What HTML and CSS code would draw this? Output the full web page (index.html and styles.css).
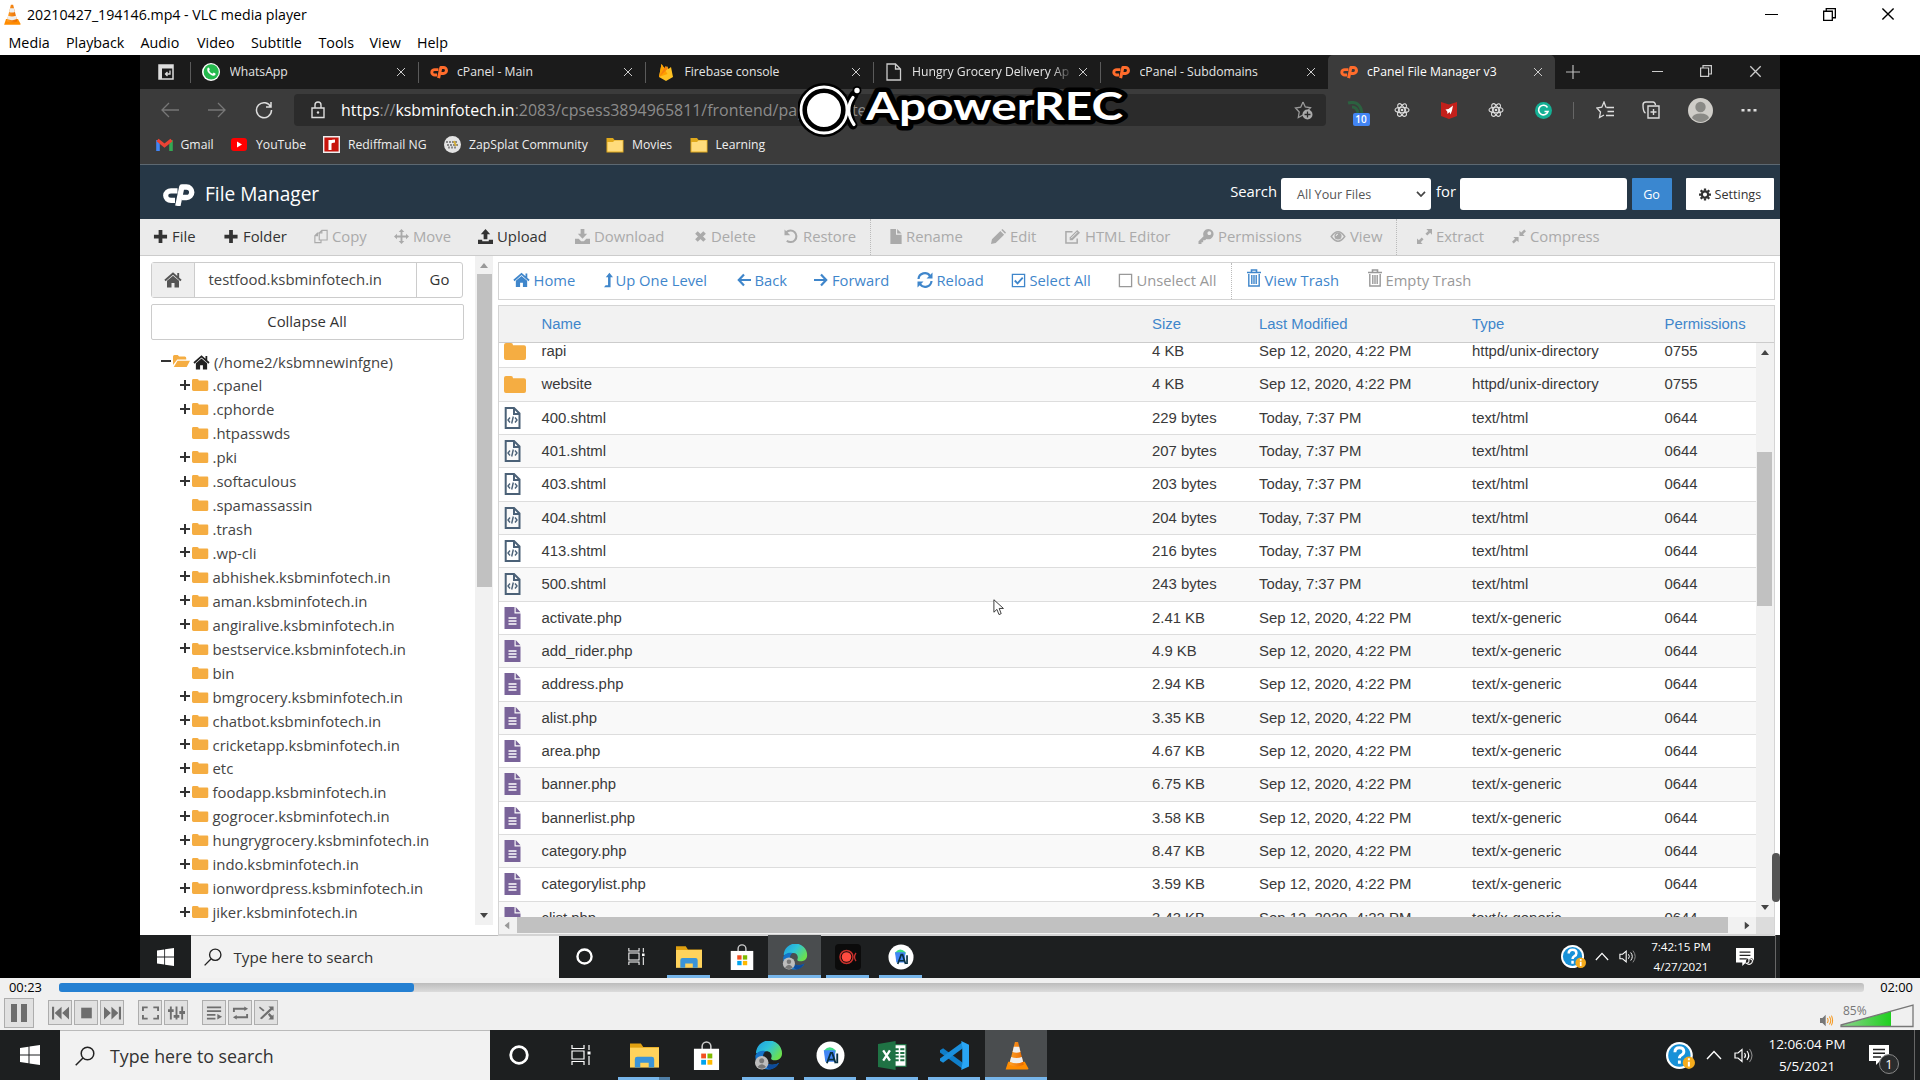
FILE: index.html
```html
<!DOCTYPE html>
<html lang="en">
<head>
<meta charset="utf-8">
<title>20210427_194146.mp4 - VLC media player</title>
<link rel="stylesheet" href="styles.css">
</head>
<body>
<svg class="defs" width="0" height="0">
<defs>
<linearGradient id="coneG" x1="0" x2="1"><stop offset="0" stop-color="#ffa028"/><stop offset="1" stop-color="#e86a00"/></linearGradient>
<linearGradient id="edgeA" x1="0" y1="0" x2="1" y2=".6"><stop offset="0" stop-color="#1e9be0"/><stop offset=".5" stop-color="#2fc3d8"/><stop offset="1" stop-color="#6be04e"/></linearGradient>
<linearGradient id="volG" x1="0" x2="1"><stop offset="0" stop-color="#8fd38f"/><stop offset="1" stop-color="#1fd01f"/></linearGradient>
<symbol id="cone" viewBox="0 0 24 28"><path d="M4 20h16l3.500 6.500q.3 1-1 1h-21q-1.300-1-1z" fill="#ff8c00"/><path d="M10.500 1h3L19 23q-7 3.500-14 0z" fill="url(#coneG)"/><path d="M9.400 5.500h5.200l1.200 5q-3.800 1.600-7.600 0zM6.800 15.500q5.200 2 10.400 0l1.200 4.500q-6.400 3-12.800 0z" fill="#eee"/></symbol>
<symbol id="cp" viewBox="0 0 32 22"><path d="M15 6.800H8.500a5.300 4.800 0 0 0 0 9.600H12.500" fill="none" stroke="currentColor" stroke-width="5.200"/><path d="M15.300 22 19.300 3H24a5 5 0 0 1 0 10.500h-4.500" fill="none" stroke="currentColor" stroke-width="5.400" stroke-linejoin="round"/></symbol>
<symbol id="x" viewBox="0 0 10 10"><path d="M1 1l8 8M9 1l-8 8" stroke="currentColor" stroke-width="1" fill="none"/></symbol>
<symbol id="restore" viewBox="0 0 12 12"><path d="M.6 3h8v8.400h-8zM3 3V.6h8.400V9H8.600" fill="none" stroke="currentColor" stroke-width="1.200"/></symbol>
<symbol id="plus" viewBox="0 0 16 16"><path d="M6 1h4v5h5v4h-5v5H6v-5H1V6h5z" fill="currentColor"/></symbol>
<symbol id="copy" viewBox="0 0 16 16"><path d="M6 4l3-3h6v11H6zM9 1v3H6M6 4H4L1 7v8h7v-3M4 4v3H1" fill="none" stroke="currentColor" stroke-width="1.300"/></symbol>
<symbol id="move" viewBox="0 0 16 16"><path d="M8 0l3 3.200H9V7h3.800V5L16 8l-3.200 3V9H9v3.800h2L8 16l-3-3.200h2V9H3.200v2L0 8l3.200-3v2H7V3.200H5z" fill="currentColor"/></symbol>
<symbol id="upload" viewBox="0 0 16 16"><path d="M8 0l5 5.500H10V11H6V5.500H3zM0 11.500h4.500V13h7v-1.500H16V16H0z" fill="currentColor"/></symbol>
<symbol id="download" viewBox="0 0 16 16"><path d="M6 0h4v5h3L8 10.500 3 5h3zM0 10.500h4l2.500 2.500h3l2.500-2.500h4V16H0z" fill="currentColor"/></symbol>
<symbol id="del" viewBox="0 0 16 16"><path d="M3 3l10 10M13 3L3 13" stroke="currentColor" stroke-width="4.500"/></symbol>
<symbol id="undo" viewBox="0 0 16 16"><path d="M2.500 3.500A6.200 6.200 0 1 1 3 12.500" fill="none" stroke="currentColor" stroke-width="2.200"/><path d="M.5.500v6.200h6.200z" fill="currentColor"/></symbol>
<symbol id="file" viewBox="0 0 12 16"><path d="M0 0h6v6h6v10H0zM7.200 0L12 4.900H7.200z" fill="currentColor"/></symbol>
<symbol id="pencil" viewBox="0 0 16 16"><path d="M0 16l1-5L10 2l4 4-9 9zM11 1l1.200-1L16 3.700 15 5z" fill="currentColor"/></symbol>
<symbol id="edit" viewBox="0 0 16 16"><path d="M13 10v5H1V3h7" fill="none" stroke="currentColor" stroke-width="1.600"/><path d="M5 12V9l8-8 3 3-8 8z" fill="currentColor"/><path d="M6.500 9.800l6.500-6.500" stroke="#eee" stroke-width="1"/></symbol>
<symbol id="key" viewBox="0 0 16 16"><path d="M10.500 0a5.500 5.500 0 1 1-2 10.600L7 12H5v2H3.200v2H0v-3l5.400-5.400A5.500 5.500 0 0 1 10.500 0zm1 2.500a2 2 0 1 0 .1 0z" fill="currentColor" fill-rule="evenodd"/></symbol>
<symbol id="eye" viewBox="0 0 16 16"><path d="M.8 8Q8-2 15.200 8 8 18 .8 8z" fill="none" stroke="currentColor" stroke-width="1.600"/><circle cx="8" cy="7.500" r="3.800" fill="currentColor"/><path d="M6 7.500a2 2 0 0 1 2-2" stroke="#eee" fill="none"/></symbol>
<symbol id="extract" viewBox="0 0 16 16"><path d="M10 0h6v6l-2-2-3 3-2-2 3-3zM0 16v-6l2 2 3-3 2 2-3 3 2 2z" fill="currentColor"/></symbol>
<symbol id="compress" viewBox="0 0 16 16"><path d="M8.500 7.500v-6l2 2L14 0l2 2-3.500 3.500 2 2zM7.500 8.500v6l-2-2L2 16l-2-2 3.500-3.500-2-2z" fill="currentColor"/></symbol>
<symbol id="home" viewBox="0 0 18 16"><path d="M9 3.800l6 5V15.500h-4.500V11h-3v4.500H3V8.800z" fill="currentColor"/><path d="M1 8.500L9 1.500l8 7M14.200 1v4.500" fill="none" stroke="currentColor" stroke-width="1.900"/></symbol>
<symbol id="up" viewBox="0 0 10 16"><path d="M6 0l4 5H7.300v11H0l1.800-2.300h2.700V5H2z" fill="currentColor"/></symbol>
<symbol id="left" viewBox="0 0 14 14"><path d="M7 1.500L1.800 7 7 12.500M2 7h12" fill="none" stroke="currentColor" stroke-width="2.200"/></symbol>
<symbol id="right" viewBox="0 0 14 14"><path d="M7 1.500L12.200 7 7 12.500M12 7H0" fill="none" stroke="currentColor" stroke-width="2.200"/></symbol>
<symbol id="reload" viewBox="0 0 16 16"><path d="M1.500 7A6.300 6.300 0 0 1 13 4M14.500 9A6.300 6.300 0 0 1 3 12" fill="none" stroke="currentColor" stroke-width="2.200"/><path d="M15.500.5v6h-6zM.5 15.500v-6h6z" fill="currentColor"/></symbol>
<symbol id="check" viewBox="0 0 16 16"><path d="M1.500 1.500h13v13h-13z" fill="none" stroke="currentColor" stroke-width="1.400"/><path d="M4 8l3 3 5.500-6" fill="none" stroke="currentColor" stroke-width="2"/></symbol>
<symbol id="box" viewBox="0 0 16 16"><path d="M1.500 1.500h13v13h-13z" fill="none" stroke="currentColor" stroke-width="1.400"/></symbol>
<symbol id="trash" viewBox="0 0 14 18"><path d="M0 3.500h14M4.500 3V1h5v2" fill="none" stroke="currentColor" stroke-width="1.600"/><path d="M1.800 5v12h10.400V5M4.800 6v9M7 6v9M9.200 6v9" fill="none" stroke="currentColor" stroke-width="1.400"/></symbol>
<symbol id="gear" viewBox="0 0 16 16"><circle cx="8" cy="8" r="4.200" fill="none" stroke="currentColor" stroke-width="3"/><path d="M8 0v3M8 13v3M0 8h3M13 8h3M2.300 2.300l2.200 2.200M11.500 11.500l2.200 2.200M13.700 2.300l-2.200 2.200M4.500 11.500l-2.200 2.200" stroke="currentColor" stroke-width="3"/></symbol>
<symbol id="folder" viewBox="0 0 22 17" preserveAspectRatio="none"><path d="M0 2Q0 0 2 0h5q2 0 2 2.200h11q2 0 2 2V15q0 2-2 2H2q-2 0-2-2z" fill="#f5ad42"/></symbol>
<symbol id="fopen" viewBox="0 0 18 12" preserveAspectRatio="none"><path d="M0 10V1.500Q0 0 1.500 0h3.500L6.500 1.500h6q1.500 0 1.500 1.500v1.500H4.500z" fill="#f5ad42"/><path d="M4.800 5.700H18L14.500 12H.8z" fill="#f5ad42"/></symbol>
<symbol id="code" viewBox="0 0 16 22"><path d="M1.200 1h8.300L15 6.500V21H1.200zM9.500 1v6H15" fill="none" stroke="#4b6177" stroke-width="2"/><path d="M5.500 10.500L3.500 13l2 2.500M10.500 10.500l2 2.500-2 2.500M8.800 9.500l-1.600 7" fill="none" stroke="#4b6177" stroke-width="1.400"/></symbol>
<symbol id="doc" viewBox="0 0 16 22"><path d="M0 0h10v6.500h6V22H0zM11.200 0L16 5.300h-4.800z" fill="#796399"/><path d="M4 11h8M4 14h8M4 17h8" stroke="#fff" stroke-width="1.300"/></symbol>
<symbol id="bfold" viewBox="0 0 18 16"><path d="M.5 1h6.500l1.500 2H17.500v12.500H.5z" fill="#e0a91c"/><path d="M1.500 5h5.500l1.500-1.500h8.200v11H1.500z" fill="#ffdc7c"/></symbol>
<symbol id="react" viewBox="0 0 16 16"><g fill="none" stroke="#ddd" stroke-width="1.100"><ellipse cx="8" cy="8" rx="7" ry="2.800"/><ellipse cx="8" cy="8" rx="7" ry="2.800" transform="rotate(60 8 8)"/><ellipse cx="8" cy="8" rx="7" ry="2.800" transform="rotate(120 8 8)"/></g><circle cx="8" cy="8" r="1.300" fill="#ddd"/></symbol>
<symbol id="win" viewBox="0 0 20 20" preserveAspectRatio="none"><path d="M0 2.900l8.500-1.200v7.800H0zM9.500 1.500L20 0v9.500H9.500zM0 10.500h8.500v7.800L0 17.100zM9.500 10.500H20V20L9.500 18.500z" fill="#fff"/></symbol>
<symbol id="lens" viewBox="0 0 20 20"><circle cx="12.500" cy="7.500" r="6.300" fill="none" stroke="#222" stroke-width="1.500"/><path d="M8 12L.7 19.300" stroke="#222" stroke-width="1.500"/></symbol>
<symbol id="ring" viewBox="0 0 20 20"><circle cx="10" cy="10" r="8.300" fill="none" stroke="#fff" stroke-width="2.800"/></symbol>
<symbol id="tview" viewBox="0 0 20 20"><path d="M1 0v3.500h12V0M1 20v-3.500h12V20M1 6h12v8H1zM18 0v5M18 11v9" fill="none" stroke="#fff" stroke-width="1.200"/><path d="M16.500 6.500h3v3h-3z" fill="#fff"/></symbol>
<symbol id="expl" viewBox="0 0 24 22"><path d="M0 1h9l2 3h13v6H0z" fill="#e0a010"/><path d="M0 4.500h24V21H0z" fill="#ffd35c"/><path d="M4 21v-7q0-2 2-2h12q2 0 2 2v7h-4.500v-4h-7v4z" fill="#3a94d8"/></symbol>
<symbol id="store" viewBox="0 0 26 30"><path d="M8.500 9V5.500a4.500 4.500 0 0 1 9 0V9" fill="none" stroke="#ccc" stroke-width="1.600"/><path d="M0 8h26v22H0z" fill="#fff"/><path d="M7.500 13H12.500v5h-5z" fill="#f25022"/><path d="M14 13h5v5h-5z" fill="#7fba00"/><path d="M7.500 19.500h5v5h-5z" fill="#00a4ef"/><path d="M14 19.500h5v5h-5z" fill="#ffb900"/></symbol>
<symbol id="edge" viewBox="0 0 30 30"><path d="M2 13A13.500 13.500 0 0 1 29 13c0 5-4 7-7.500 7-3 0-4.500-1-3.500-3 1-3-1-6.500-5-6.500-5 0-9 2-11 2.500z" fill="url(#edgeA)"/><path d="M1.500 15C3 11 8 9 12 10.500c-4 3-4 10 2 13 4 2 9 1 12-1-3 6-10 8-15 6.500C4 27 1 21 1.500 15z" fill="#1573c9"/><path d="M12 11c-4 4-3 10 2 12.500 4 2 9 1 12-1-2 4-6 6.500-9 7-7-2-10-13-5-18.500z" fill="#0d4b9b"/><circle cx="8" cy="22.500" r="7" fill="#bdbdbd"/><circle cx="8" cy="20.500" r="2.600" fill="#777"/><path d="M3.500 27q4.500-6 9 0-4.500 3.500-9 0z" fill="#777"/></symbol>
<symbol id="rec" viewBox="0 0 26 26"><rect width="26" height="26" rx="4" fill="#0b0b0b"/><circle cx="11.500" cy="13" r="6.500" fill="none" stroke="#c8302c" stroke-width="1.500"/><circle cx="11.500" cy="13" r="4.800" fill="#ff4b40"/><path d="M21 9q-3 4 0 8" stroke="#c8302c" fill="none" stroke-width="1.300"/></symbol>
<symbol id="as" viewBox="0 0 28 28"><circle cx="14" cy="14" r="13.500" fill="#fff"/><path d="M8 9q5-6 11 0v2H8z" fill="#3ddc84"/><path d="M7.500 9h11v11H9z" fill="#4285f4"/><path d="M10.500 21.500l3.700-10h1.500l3.200 10M12 18h5.500M20.500 12v9.500" fill="none" stroke="#073042" stroke-width="1.800"/></symbol>
<symbol id="excel" viewBox="0 0 28 28"><path d="M14 3.500h13v21H14z" fill="#fff" stroke="#1f7244"/><path d="M16 7h4v2h-4zm0 3.500h4v2h-4zm0 3.500h4v2h-4zm0 3.500h4v2h-4zM21.500 7h4v2h-4zm0 3.500h4v2h-4zm0 3.500h4v2h-4zm0 3.500h4v2h-4z" fill="#1f7244"/><path d="M0 3L17 0v28L0 25z" fill="#1f7244"/><path d="M5 9l6.500 10M11.500 9L5 19" stroke="#fff" stroke-width="2.200"/></symbol>
<symbol id="code-ed" viewBox="0 0 28 28"><path d="M0 9l3-2 19 14v6L0 11z" fill="#0f7ec9"/><path d="M0 19l3 2L22 7V1L0 17z" fill="#1a8fdc"/><path d="M20.500 0L28 3.500v21L20.500 28l1-6V6z" fill="#29a5f5"/></symbol>
<symbol id="help" viewBox="0 0 26 26"><circle cx="12" cy="13" r="12" fill="#fff"/><circle cx="12" cy="13" r="10" fill="#1791d8"/><path d="M8 10q0-4 4-4t4 3.500q0 2-2 3t-2 3M12 17.500v3" fill="none" stroke="#fff" stroke-width="2.600"/><circle cx="20.500" cy="19.500" r="5.500" fill="#f5ab1c"/><path d="M20.500 15.500v1.800M20.500 18.500v4.300" stroke="#fff" stroke-width="1.800"/></symbol>
<symbol id="caret" viewBox="0 0 16 10"><path d="M1 9l7-7.500L15 9" fill="none" stroke="#fff" stroke-width="1.400"/></symbol>
<symbol id="snd" viewBox="0 0 20 16"><path d="M1 5.500h3L8 2v12L4 10.500H1z" fill="none" stroke="#fff" stroke-width="1.200"/><path d="M10.500 5.500q2 2.500 0 5M13 3.500q3.500 4.500 0 9" fill="none" stroke="#fff" stroke-width="1.100"/><path d="M15.500 1.500q5 6.500 0 13" fill="none" stroke="#888" stroke-width="1.100"/></symbol>
<symbol id="note" viewBox="0 0 20 20"><path d="M0 0h20v16h-9l-4 4v-4H0z" fill="#fff"/><path d="M4 4.500h12M4 8.200h12M4 12h8" stroke="#222" stroke-width="1.400"/></symbol>
<symbol id="tri" viewBox="0 0 8 5"><path d="M0 5L4 0l4 5z" fill="currentColor"/></symbol>
</defs>
</svg>

<header class="titlebar">
  <svg class="ico-cone" viewBox="0 0 24 28"><use href="#cone"/></svg>
  <span class="title">20210427_194146.mp4 - VLC media player</span>
  <div class="winbtns"><i class="min"></i><svg width="13" height="13"><use href="#restore"/></svg><svg width="14" height="14"><use href="#x"/></svg></div>
</header>
<nav class="menu"><span>Media</span><span>Playback</span><span>Audio</span><span>Video</span><span>Subtitle</span><span>Tools</span><span>View</span><span>Help</span></nav>

<main class="stage">
 <div class="video">
  <div class="tabs">
    <div class="tabmenu"><svg width="16" height="16" viewBox="0 0 16 16"><path d="M1 1h14v14H1z" fill="none" stroke="#ddd" stroke-width="1.500"/><path d="M1 1h14v3.500H1zM1 4h3v11H1z" fill="#ddd"/><path d="M12 6.500v3.500H7.500M9.500 8l-2 2 2 2" fill="none" stroke="#ddd" stroke-width="1.300"/></svg></div>
    <div class="tab"><svg class="fav" viewBox="0 0 18 18" preserveAspectRatio="none"><circle cx="9" cy="9" r="9" fill="#fff"/><path d="M0 18l1-5z" fill="#fff"/><circle cx="9.200" cy="8.800" r="7.600" fill="#25b94d"/><path d="M5.500 5q1.500-1.500 2.300 1.500-1 1-.5 1.500Q8.500 10 10.500 10.800l1.200-1.200q2.600 1 1.800 2.200-2 2-5-.3Q4.200 8.500 5.500 5z" fill="#fff"/></svg><span>WhatsApp</span><svg class="cl"><use href="#x"/></svg></div>
    <div class="tab"><svg class="fav org"><use href="#cp"/></svg><span>cPanel - Main</span><svg class="cl"><use href="#x"/></svg></div>
    <div class="tab"><svg class="fav" viewBox="0 0 18 18" preserveAspectRatio="none"><path d="M2 14L4.500 1 8 6l2-3 1.500 3L14 4l2 10-7 4z" fill="#ffc222"/><path d="M2 14L4.500 1l6 10z" fill="#ffa000"/><path d="M2 14L11 5.500 8.500 3z" fill="#f6820c"/></svg><span>Firebase console</span><svg class="cl"><use href="#x"/></svg></div>
    <div class="tab"><svg class="fav" viewBox="0 0 18 18" preserveAspectRatio="none"><path d="M2 1h8.500L15.500 6v11H2zM10.500 1v5h5" fill="none" stroke="#ccc" stroke-width="1.300"/></svg><span class="fade">Hungry Grocery Delivery Ap</span><svg class="cl"><use href="#x"/></svg></div>
    <div class="tab"><svg class="fav org"><use href="#cp"/></svg><span>cPanel - Subdomains</span><svg class="cl"><use href="#x"/></svg></div>
    <div class="tab active"><svg class="fav org"><use href="#cp"/></svg><span>cPanel File Manager v3</span><svg class="cl"><use href="#x"/></svg></div>
    <svg class="newtab" viewBox="0 0 14 14"><path d="M7 0v14M0 7h14" stroke="#bbb" stroke-width="1.200"/></svg>
    <div class="ewin"><i class="min"></i><svg width="12" height="12"><use href="#restore"/></svg><svg width="13" height="13"><use href="#x"/></svg></div>
  </div>
  <div class="addr">
    <svg class="nav" viewBox="0 0 18 16"><path d="M8 1L1 8l7 7M1 8h17" fill="none" stroke="#777" stroke-width="1.300"/></svg>
    <svg class="nav" viewBox="0 0 18 16"><path d="M10 1l7 7-7 7M17 8H0" fill="none" stroke="#777" stroke-width="1.300"/></svg>
    <svg class="nav rl" viewBox="0 0 18 18"><path d="M15.800 6A7.500 7.500 0 1 0 16.500 9M16 1v5h-5" fill="none" stroke="#ddd" stroke-width="1.500"/></svg>
    <div class="url"><svg width="14" height="18" viewBox="0 0 14 18"><path d="M1 7h12v9.500H1zM4 7V4a3 3 0 0 1 6 0v3" fill="none" stroke="#ddd" stroke-width="1.400"/><circle cx="7" cy="11.500" r="1.200" fill="#ddd"/></svg><p><b>https<i>://</i>ksbminfotech.in</b>:2083/cpsess3894965811/frontend/paper_lantern/filemanager/index.html</p><svg width="20" height="19" viewBox="0 0 20 19"><path d="M9 1l2.300 5 5.200.8-3.700 3.800M9 14l-4.700 2.500.9-5.500L1.500 7l5.200-.8L9 1" fill="none" stroke="#999" stroke-width="1.300"/><circle cx="13.500" cy="13.500" r="5" fill="#aaa"/><path d="M13.500 10.500v6M10.500 13.500h6" stroke="#2b2b2b" stroke-width="1.300"/></svg></div>
    <div class="exts">
      <span class="ext"><svg width="18" height="18" viewBox="0 0 18 18"><path d="M2 2q12-3 14 10M6 6q5 0 6 6" fill="none" stroke="#2c6140" stroke-width="3"/></svg><em class="badge">10</em></span>
      <span class="ext"><svg width="16" height="16"><use href="#react"/></svg></span>
      <span class="ext"><svg width="16" height="17" viewBox="0 0 16 17"><path d="M0 0l8 2.500L16 0v14l-8 3-8-3z" fill="#c2201b"/><path d="M4.500 7.500l3-.5L12 3.500l-1 5-1.500 4-1-2.500-2 2-.3-2.500z" fill="#fff"/></svg></span>
      <span class="ext"><svg width="16" height="16"><use href="#react"/></svg></span>
      <span class="ext"><svg width="17" height="17" viewBox="0 0 17 17"><circle cx="8.500" cy="8.500" r="8.500" fill="#15b095"/><path d="M12.500 5.500A4.800 4.800 0 1 0 13 9.500H9.500" fill="none" stroke="#fff" stroke-width="1.600"/></svg></span>
    </div>
    <i class="vsep"></i>
    <div class="etools">
      <svg width="18" height="18" viewBox="0 0 18 18"><path d="M10 6.500L8 1 5.800 6.200.8 7l3.700 4-1 5.500L8 14M10.500 6.500H18M11.500 10.500H18M10 14.500h8" fill="none" stroke="#ddd" stroke-width="1.300"/></svg>
      <svg width="18" height="18" viewBox="0 0 18 18"><path d="M6 5h11v12H6zM11.500 8v6M8.500 11h6M3.500 12Q1 11 1 4q0-3 3-3h7q2 0 2.500 3" fill="none" stroke="#ddd" stroke-width="1.400"/></svg>
      <svg width="25" height="25" viewBox="0 0 25 25"><circle cx="12.500" cy="12.500" r="12.500" fill="#cfcdc8"/><circle cx="12.500" cy="9" r="5.200" fill="#8a8a86"/><path d="M4 20q1-4.500 8.500-4.500T21 20q-8 8-17 0z" fill="#8a8a86"/></svg>
      <svg width="16" height="4" viewBox="0 0 16 4"><path d="M.5 1h3v2.500h-3zm6 0h3v2.500h-3zm6 0h3v2.500h-3z" fill="#ddd"/></svg>
    </div>
  </div>
  <div class="bm">
    <span><svg width="17" height="13" viewBox="0 0 17 13"><path d="M2 13V2" stroke="#4285f4" stroke-width="3.600"/><path d="M15 13V2" stroke="#34a853" stroke-width="3.600"/><path d="M1.500 2l7 5.500 7-5.500" fill="none" stroke="#ea4335" stroke-width="3.400"/></svg>Gmail</span>
    <span><svg width="16" height="13" viewBox="0 0 16 13"><rect width="16" height="13" rx="3" fill="#f00"/><path d="M6 3.500v6l5-3z" fill="#fff"/></svg><b>YouTube</b></span>
    <span><svg width="17" height="17" viewBox="0 0 17 17"><path d="M.7.700h15.600v15.600H.7z" fill="#c8140c" stroke="#eee" stroke-width="1.400"/><path d="M7 14V4M7 8q0-3 5-3" fill="none" stroke="#fff" stroke-width="3"/></svg>Rediffmail NG</span>
    <span><svg width="17" height="17" viewBox="0 0 17 17"><circle cx="8.500" cy="8.500" r="8.500" fill="#e4e4e4"/><path d="M2 6h11M3 9h12M4 11.500h8" stroke="#888" stroke-width="1.800" stroke-dasharray="2 1"/><path d="M10 5l2 5" stroke="#d8b13a" stroke-width="2"/></svg>ZapSplat Community</span>
    <span><svg width="18" height="16"><use href="#bfold"/></svg>Movies</span>
    <span><svg width="18" height="16"><use href="#bfold"/></svg>Learning</span>
  </div>
  <div class="cphead">
    <svg class="logo"><use href="#cp"/></svg><h1>File Manager</h1>
    <label>Search</label><div class="sel">All Your Files<svg width="10" height="6" viewBox="0 0 10 6"><path d="M1 .8L5 5 9 .8" fill="none" stroke="#444" stroke-width="1.700"/></svg></div><label class="for">for</label><div class="inp"></div><div class="go">Go</div><div class="settings"><svg width="12" height="13"><use href="#gear"/></svg>Settings</div>
  </div>
  <div class="tools">
    <span class="on"><svg width="15"><use href="#plus"/></svg>File</span><span class="on"><svg width="16"><use href="#plus"/></svg>Folder</span><span><svg width="14"><use href="#copy"/></svg>Copy</span><span><svg width="15"><use href="#move"/></svg>Move</span><span class="on"><svg width="15"><use href="#upload"/></svg>Upload</span><span><svg width="15"><use href="#download"/></svg>Download</span><span><svg width="13"><use href="#del"/></svg>Delete</span><span class="brk"><svg width="15"><use href="#undo"/></svg>Restore</span><span><svg width="12"><use href="#file"/></svg>Rename</span><span><svg width="15"><use href="#pencil"/></svg>Edit</span><span><svg width="17"><use href="#edit"/></svg>HTML Editor</span><span><svg width="16"><use href="#key"/></svg>Permissions</span><span class="brk b2"><svg width="16"><use href="#eye"/></svg>View</span><span><svg width="15"><use href="#extract"/></svg>Extract</span><span><svg width="14"><use href="#compress"/></svg>Compress</span>
  </div>
  <div class="work">
    <aside>
      <div class="side">
        <div class="path"><i><svg width="18" height="16"><use href="#home"/></svg></i><span>testfood.ksbminfotech.in</span><b>Go</b></div>
        <div class="collapse">Collapse All</div>
        <ul class="tree">
          <li class="root"><u class="mi"></u><svg width="17" height="12"><use href="#fopen"/></svg><svg class="hm" width="17" height="16"><use href="#home"/></svg>(/home2/ksbmnewinfgne)</li>
          <li><u></u><svg><use href="#folder"/></svg>.cpanel</li>
          <li><u></u><svg><use href="#folder"/></svg>.cphorde</li>
          <li><u class="no"></u><svg><use href="#folder"/></svg>.htpasswds</li>
          <li><u></u><svg><use href="#folder"/></svg>.pki</li>
          <li><u></u><svg><use href="#folder"/></svg>.softaculous</li>
          <li><u class="no"></u><svg><use href="#folder"/></svg>.spamassassin</li>
          <li><u></u><svg><use href="#folder"/></svg>.trash</li>
          <li><u></u><svg><use href="#folder"/></svg>.wp-cli</li>
          <li><u></u><svg><use href="#folder"/></svg>abhishek.ksbminfotech.in</li>
          <li><u></u><svg><use href="#folder"/></svg>aman.ksbminfotech.in</li>
          <li><u></u><svg><use href="#folder"/></svg>angiralive.ksbminfotech.in</li>
          <li><u></u><svg><use href="#folder"/></svg>bestservice.ksbminfotech.in</li>
          <li><u class="no"></u><svg><use href="#folder"/></svg>bin</li>
          <li><u></u><svg><use href="#folder"/></svg>bmgrocery.ksbminfotech.in</li>
          <li><u></u><svg><use href="#folder"/></svg>chatbot.ksbminfotech.in</li>
          <li><u></u><svg><use href="#folder"/></svg>cricketapp.ksbminfotech.in</li>
          <li><u></u><svg><use href="#folder"/></svg>etc</li>
          <li><u></u><svg><use href="#folder"/></svg>foodapp.ksbminfotech.in</li>
          <li><u></u><svg><use href="#folder"/></svg>gogrocer.ksbminfotech.in</li>
          <li><u></u><svg><use href="#folder"/></svg>hungrygrocery.ksbminfotech.in</li>
          <li><u></u><svg><use href="#folder"/></svg>indo.ksbminfotech.in</li>
          <li><u></u><svg><use href="#folder"/></svg>ionwordpress.ksbminfotech.in</li>
          <li><u></u><svg><use href="#folder"/></svg>jiker.ksbminfotech.in</li>
        </ul>
      </div>
      <div class="sbar"><svg class="t dim"><use href="#tri"/></svg><i></i><svg class="t dn"><use href="#tri"/></svg></div>
    </aside>
    <section class="files">
      <div class="acts"><span><svg width="17" height="16"><use href="#home"/></svg>Home</span><span><svg width="9" height="16"><use href="#up"/></svg>Up One Level</span><span><svg width="14" height="14"><use href="#left"/></svg>Back</span><span><svg width="14" height="14"><use href="#right"/></svg>Forward</span><span><svg width="16" height="16"><use href="#reload"/></svg>Reload</span><span><svg width="15" height="15"><use href="#check"/></svg>Select All</span><span class="off brk"><svg width="15" height="15"><use href="#box"/></svg>Unselect All</span><span><svg class="tr" width="14" height="18"><use href="#trash"/></svg>View Trash</span><span class="off"><svg class="tr" width="14" height="18"><use href="#trash"/></svg>Empty Trash</span></div>
      <div class="grid">
        <div class="row head"><i></i><span>Name</span><span>Size</span><span>Last Modified</span><span>Type</span><span>Permissions</span></div>
        <div class="scroll">
          <div class="rows">
            <div class="row"><svg class="fo"><use href="#folder"/></svg><span>rapi</span><span>4 KB</span><span>Sep 12, 2020, 4:22 PM</span><span>httpd/unix-directory</span><span>0755</span></div>
            <div class="row"><svg class="fo"><use href="#folder"/></svg><span>website</span><span>4 KB</span><span>Sep 12, 2020, 4:22 PM</span><span>httpd/unix-directory</span><span>0755</span></div>
            <div class="row"><svg><use href="#code"/></svg><span>400.shtml</span><span>229 bytes</span><span>Today, 7:37 PM</span><span>text/html</span><span>0644</span></div>
            <div class="row"><svg><use href="#code"/></svg><span>401.shtml</span><span>207 bytes</span><span>Today, 7:37 PM</span><span>text/html</span><span>0644</span></div>
            <div class="row"><svg><use href="#code"/></svg><span>403.shtml</span><span>203 bytes</span><span>Today, 7:37 PM</span><span>text/html</span><span>0644</span></div>
            <div class="row"><svg><use href="#code"/></svg><span>404.shtml</span><span>204 bytes</span><span>Today, 7:37 PM</span><span>text/html</span><span>0644</span></div>
            <div class="row"><svg><use href="#code"/></svg><span>413.shtml</span><span>216 bytes</span><span>Today, 7:37 PM</span><span>text/html</span><span>0644</span></div>
            <div class="row"><svg><use href="#code"/></svg><span>500.shtml</span><span>243 bytes</span><span>Today, 7:37 PM</span><span>text/html</span><span>0644</span></div>
            <div class="row"><svg><use href="#doc"/></svg><span>activate.php</span><span>2.41 KB</span><span>Sep 12, 2020, 4:22 PM</span><span>text/x-generic</span><span>0644</span></div>
            <div class="row"><svg><use href="#doc"/></svg><span>add_rider.php</span><span>4.9 KB</span><span>Sep 12, 2020, 4:22 PM</span><span>text/x-generic</span><span>0644</span></div>
            <div class="row"><svg><use href="#doc"/></svg><span>address.php</span><span>2.94 KB</span><span>Sep 12, 2020, 4:22 PM</span><span>text/x-generic</span><span>0644</span></div>
            <div class="row"><svg><use href="#doc"/></svg><span>alist.php</span><span>3.35 KB</span><span>Sep 12, 2020, 4:22 PM</span><span>text/x-generic</span><span>0644</span></div>
            <div class="row"><svg><use href="#doc"/></svg><span>area.php</span><span>4.67 KB</span><span>Sep 12, 2020, 4:22 PM</span><span>text/x-generic</span><span>0644</span></div>
            <div class="row"><svg><use href="#doc"/></svg><span>banner.php</span><span>6.75 KB</span><span>Sep 12, 2020, 4:22 PM</span><span>text/x-generic</span><span>0644</span></div>
            <div class="row"><svg><use href="#doc"/></svg><span>bannerlist.php</span><span>3.58 KB</span><span>Sep 12, 2020, 4:22 PM</span><span>text/x-generic</span><span>0644</span></div>
            <div class="row"><svg><use href="#doc"/></svg><span>category.php</span><span>8.47 KB</span><span>Sep 12, 2020, 4:22 PM</span><span>text/x-generic</span><span>0644</span></div>
            <div class="row"><svg><use href="#doc"/></svg><span>categorylist.php</span><span>3.59 KB</span><span>Sep 12, 2020, 4:22 PM</span><span>text/x-generic</span><span>0644</span></div>
            <div class="row"><svg><use href="#doc"/></svg><span>clist.php</span><span>3.43 KB</span><span>Sep 12, 2020, 4:22 PM</span><span>text/x-generic</span><span>0644</span></div>
          </div>
          <div class="sbar v2"><svg class="t"><use href="#tri"/></svg><i></i><svg class="t dn"><use href="#tri"/></svg></div>
        </div>
        <div class="hbar"><svg class="t lf dim"><use href="#tri"/></svg><i></i><svg class="t rt"><use href="#tri"/></svg><b></b></div>
      </div>
    </section>
    <i class="pagethumb"></i>
    <svg class="cursor" viewBox="0 0 12 18"><path d="M.6.800V14l3.200-3 2.200 5.500 2.300-1L6.200 10h4.500z" fill="#fff" stroke="#333" stroke-width="1"/></svg>
  </div>
  <div class="task inner">
    <div class="start"><svg><use href="#win"/></svg></div>
    <div class="find"><svg><use href="#lens"/></svg>Type here to search</div>
    <div class="apps">
      <span class="w1"><svg class="s16"><use href="#ring"/></svg></span><span class="w1"><svg class="s16"><use href="#tview"/></svg></span>
      <span class="run"><svg><use href="#expl"/></svg></span><span><svg><use href="#store"/></svg></span><span class="run cur"><svg><use href="#edge"/></svg></span><span class="run"><svg><use href="#rec"/></svg></span><span class="run"><svg><use href="#as"/></svg></span>
    </div>
    <div class="tray"><svg class="hp"><use href="#help"/></svg><svg class="ct"><use href="#caret"/></svg><svg class="sd"><use href="#snd"/></svg><div class="clock"><span>7:42:15 PM</span><span>4/27/2021</span></div><svg class="nt" viewBox="0 0 20 20"><use href="#note"/><circle cx="15.500" cy="15.500" r="4.500" fill="#222"/><path d="M14 11.500q6 1 3.500 5-2.500 3-6 .5 4 0 2.500-5.500z" fill="none" stroke="#fff" stroke-width="1.200"/></svg><i></i></div>
  </div>
  <svg class="mark" viewBox="0 0 340 64">
    <g transform="translate(26 32)"><circle r="21.500" fill="none" stroke="#000" stroke-width="11"/><path d="M30-15Q20 0 29 15" fill="none" stroke="#000" stroke-width="9" stroke-linecap="round"/><circle r="18" fill="#fff" stroke="#000" stroke-width="2"/><circle r="23" fill="none" stroke="#fff" stroke-width="2.800"/><path d="M29-12.500Q20 0 30 14.500" fill="none" stroke="#fff" stroke-width="3.200" stroke-linecap="round"/><circle cx="33" cy="-19.500" r="4.500"/><circle cx="33" cy="-19.500" r="2.700" fill="#fff"/></g>
    <text x="68" y="42" textLength="257" lengthAdjust="spacingAndGlyphs">ApowerREC</text>
  </svg>
 </div>
</main>

<footer class="ctl">
  <div class="seek"><span>00:23</span><div class="track"><i></i></div><span>02:00</span></div>
  <div class="btns">
    <button class="big"><svg width="16" height="18" viewBox="0 0 16 18"><path d="M0 0h6v18H0zM10 0h6v18h-6z"/></svg></button>
    <div class="grp g1"><button><svg viewBox="0 0 16 12"><path d="M0 0h2v12H0zM9 0v12L2.500 6zM16 0v12L9.500 6z"/></svg></button><button><svg viewBox="0 0 16 12"><path d="M3 1h10v10H3z"/></svg></button><button><svg viewBox="0 0 16 12"><path d="M14 0h2v12h-2zM7 0v12l6.500-6zM0 0v12l6.500-6z"/></svg></button></div>
    <div class="grp g2"><button><svg viewBox="0 0 18 14"><path d="M0 0h6v2H2v3H0zM12 0h6v5h-2V2h-4zM0 9h2v3h4v2H0zM16 9h2v5h-6v-2h4z"/></svg></button><button><svg viewBox="0 0 18 14"><path d="M2 0h2v14H2zM8 0h2v14H8zM14 0h2v14h-2zM0 3h6v3H0zM6 9h6v3H6zM12 5h6v3h-6z"/></svg></button></div>
    <div class="grp g3"><button><svg viewBox="0 0 18 14"><path d="M1 0h15v2H1zM1 4h15v2H1zM1 8h9v2H1zM1 12h9v2H1zM12 8l5 3-5 3z"/></svg></button><button><svg viewBox="0 0 18 14"><path d="M1 6V1.500h12V0l4 2.500-4 2.500V3.500H3V6zM17 8v4.500H5V14l-4-2.500L5 9v1.500h10V8z"/></svg></button><button><svg viewBox="0 0 18 14"><path d="M2 0l5 4-1.500 1.500L1 1.500zM10.500 8.500L12 7l3 3 1.500-1.500V14H11l2-2zM11 0h5.500v5L15 3.500 4 13.500 2 12.500 13 2z"/></svg></button></div>
    <div class="vol"><svg class="sp" viewBox="0 0 16 16" ><path d="M0 5h3l4-4v14l-4-4H0z" fill="#777"/><path d="M9 5q2 3 0 6M11.500 3q3.500 5 0 10M14 2q3 6 0 12" fill="none" stroke="#f59a23" stroke-width="1.300"/></svg>
    <div class="lvl"><svg viewBox="0 0 74 24"><path d="M1 21.500L51 7v15.500H1z" fill="url(#volG)"/><path d="M1 21L73 1v21.500H1z" fill="none" stroke="#777" stroke-width="1.300"/></svg><span>85%</span></div></div>
  </div>
</footer>

<div class="task outer">
  <div class="start"><svg><use href="#win"/></svg></div>
  <div class="find"><svg><use href="#lens"/></svg>Type here to search</div>
  <div class="apps">
    <span><svg class="s16"><use href="#ring"/></svg></span><span><svg class="s16"><use href="#tview"/></svg></span>
    <span class="run two"><svg><use href="#expl"/></svg></span><span><svg><use href="#store"/></svg></span><span class="run"><svg><use href="#edge"/></svg></span><span class="run"><svg><use href="#as"/></svg></span><span class="run"><svg><use href="#excel"/></svg></span><span class="run"><svg><use href="#code-ed"/></svg></span><span class="run cur"><svg><use href="#cone"/></svg></span>
  </div>
  <div class="tray"><svg class="hp"><use href="#help"/></svg><svg class="ct"><use href="#caret"/></svg><svg class="sd"><use href="#snd"/></svg><div class="clock"><span>12:06:04 PM</span><span>5/5/2021</span></div><div class="nwrap"><svg class="nt"><use href="#note"/></svg><em>1</em></div><i></i></div>
</div>
</body>
</html>
```
FILE: styles.css
```css
*{box-sizing:border-box}
body{margin:0;width:1920px;height:1080px;overflow:hidden;display:flex;flex-direction:column;background:#fff;font-family:"Open Sans","Noto Sans",sans-serif;color:#000;white-space:nowrap}
svg{display:block;flex:none}
i,em{font-style:normal}
.defs{position:absolute}
.titlebar{height:30px;display:flex;align-items:center;font-size:14.200px;padding:0 0 2px 3px}
.ico-cone{width:18px;height:21px;margin-right:6px}
.title{flex:1}
.winbtns{display:flex;align-items:center;gap:45px;padding-right:25px;color:#000}
.winbtns .min{width:13px;height:1px;background:#000}
.menu{height:25px;display:grid;grid-template-columns:57.500px 74.500px 56.500px 54px 67.500px 51px 47.500px auto;padding-left:8.500px;font-size:14.300px;line-height:26px}
.stage{height:923px;background:#000;padding-left:140px}
.video{width:1640px;height:923px;display:flex;flex-direction:column;background:#fff;position:relative;overflow:hidden}

/* browser chrome */
.tabs{height:34px;background:#1b1b1b;display:flex;align-items:center;font-size:12.200px;color:#e4e4e4}
.tabmenu{width:50px;padding-left:17.500px}
.tab{width:227.500px;height:34px;display:flex;align-items:center;position:relative;padding:0 12px 0 12px}
.tab::before{content:"";position:absolute;left:0;top:7px;width:1px;height:21px;background:#5a5a5a}
.tab.active{background:#3b3b3b;border-radius:5px 5px 0 0;color:#fff}
.tab.active::before{display:none}
.tab .fav{width:18px;height:18px;margin-right:9.500px}
.tab .org{color:#ff6c2c;height:14px}
.tab span{flex:1;overflow:hidden;line-height:20px}
.tab .fade{-webkit-mask-image:linear-gradient(90deg,#000 86%,transparent 99%);mask-image:linear-gradient(90deg,#000 86%,transparent 99%);margin-right:3px}
.cl{width:10px;height:10px;color:#ccc}
.newtab{width:14px;height:14px;margin-left:11px}
.ewin{display:flex;align-items:center;gap:37px;margin-left:auto;padding:0 18px 2px 0;color:#ccc}
.ewin .min{width:11px;height:1px;background:#ccc}
.addr{height:42px;background:#3b3b3b;display:flex;align-items:center;padding-left:21px}
.nav{width:18px;height:16px;margin-right:29px}
.nav.rl{height:18px;margin-right:21px}
.url{width:1031.500px;height:32px;background:#2b2b2b;border-radius:4px;display:flex;align-items:center;padding:0 12px 0 16.500px}
.url p{flex:1;margin:0 0 0 16.500px;font-size:15.950px;color:#8c8c8c;line-height:28px}
.url b{font-weight:400;color:#fff}
.url b i{color:#8c8c8c}
.exts{display:flex;padding-left:6px}
.ext{width:47px;height:18px;display:flex;justify-content:center;align-items:center;position:relative}
.badge{position:absolute;left:21px;top:12px;width:17px;height:13px;border-radius:2px;background:#4285f4;color:#fff;font:600 10px/13px "Open Sans",sans-serif;text-align:center}
.vsep{width:1px;height:17px;background:#666;margin:0 22px 0 6px}
.etools{display:flex;align-items:center;gap:28px}
.bm{height:33px;background:#3b3b3b;display:grid;grid-template-columns:75.500px 92px 121px 162px 83.500px auto;padding-left:15.500px;font-size:12.200px;color:#eee;line-height:26px}
.bm span{display:flex;align-items:center;gap:8px;height:27px}
.bm b{font-weight:400;padding-left:1px}

/* file manager header */
.cphead{height:55px;background:#263746;border-top:1px solid #5d6871;display:flex;align-items:flex-start;padding:13px 6px 0 22px;color:#fff}
.logo{width:33px;height:22px;margin-top:6px}
h1{margin:0;font-weight:400;font-size:19.100px;line-height:33px;padding-left:10px;flex:1}
.cphead label{font-size:14.800px;line-height:26px;padding-right:4px}
.cphead .for{padding:0 4px 0 5px;width:29px}
.sel,.inp,.go,.settings{height:32px;border-radius:3px;background:#fff;font-size:12.600px;color:#555;display:flex;align-items:center}
.sel{width:150px;padding:0 5px 0 16px;justify-content:space-between}
.inp{width:167px}
.go{width:40px;background:#3a87d0;color:#fff;margin:0 14.500px 0 4.500px;justify-content:center;border-radius:1px}
.settings{width:88px;color:#333;padding-left:12.500px;gap:4px;border-radius:1px}
.tools{height:37px;background:#ebebeb;border-bottom:1px solid #ccc;display:grid;grid-template-columns:70px 91px 80px 84px 97px 119px 90px 106px 101px 73px 134px 132px 87px 95px auto;padding-left:13px;font-size:14.850px;color:#aaa}
.tools span,.acts span{display:flex;align-items:center;gap:4px;position:relative}
.tools svg{height:15px}
.tools span{line-height:34px;height:34px}
.tools .on{color:#333}
.brk::after{content:"";position:absolute;right:19px;top:0;height:36px;border-left:1px dotted #bbb}
.b2::after{right:20px}

/* body: tree and listing */
.work{flex:1;display:flex;position:relative;min-height:0}
aside{width:358px;display:flex;font-size:14.900px;color:#444}
.side{width:335px;padding:6px 11px 0}
.path{height:36px;width:312px;display:flex;line-height:33px;border:1px solid #ccc;border-radius:3px}
.path i{width:43px;background:#eee;border-right:1px solid #ccc;display:flex;align-items:center;justify-content:center;color:#555}
.path span{flex:1;padding-left:13.500px}
.path b{width:46px;font-weight:400;border-left:1px solid #ccc;text-align:center;color:#333}
.collapse{width:313px;height:36px;margin-top:6px;border:1px solid #ccc;border-radius:2px;text-align:center;line-height:33px;color:#333;padding-right:1px}
.tree{list-style:none;margin:10.500px 0 0;padding:0;height:574.600px;display:grid;grid-template-rows:repeat(24,23.940px)}
.tree li{display:flex;align-items:center;line-height:23.940px;padding-left:29px}
.tree .root{padding-left:10px}
.tree svg{width:16.500px;height:12px;margin:-2px 4px 0 2px}
.tree .root svg{margin:-2px 3px 0 2px;width:17px}
.tree .root .hm{height:15px;width:17px;margin:0 4px 0 0;color:#222}
.tree u{width:10px;height:10px;margin-top:-3px;background:linear-gradient(#333,#333) center/100% 2px no-repeat,linear-gradient(#333,#333) center/2px 100% no-repeat}
.tree .mi{background:linear-gradient(#333,#333) center/100% 2px no-repeat}
.tree .no{background:none}
.sbar{width:18px;height:669px;background:#f1f1f1;display:flex;flex-direction:column;align-items:center;padding:7px 0;color:#444}
.sbar i{width:15px;height:313px;background:#c1c1c1;margin-top:6px}
.t{width:8px;height:5px}
.dim{color:#999}
.dn{transform:rotate(180deg);margin-top:auto}
.files{width:1276.500px;padding-top:6px;color:#3f86cb}
.acts{height:38px;border:1px solid #d4d4d4;display:grid;grid-template-columns:91px 133px 77.500px 102.500px 94px 107px 129px 121px auto;padding-left:13.500px;font-size:14.750px}
.acts span{height:34px}
.acts span:nth-child(2){gap:3px}
.acts .tr{margin-top:-4px}
.acts .brk::after{right:15px}
.off{color:#999}
.grid{margin-top:5px;height:630.500px;border:1px solid #d4d4d4;border-width:1px 1px 2px;font-family:"Liberation Sans",Arial,sans-serif;font-size:14.900px;display:flex;flex-direction:column}
.row{display:grid;grid-template-columns:38px 610.500px 107px 213px 192.500px auto;padding-left:4.500px;align-items:center;height:33.330px;border-bottom:1px solid #ddd;color:#3a3a3a}
.row:nth-child(even){background:#f9f9f9}
.row svg{width:17px;height:22px}
.row .fo{width:22px;height:17px}
.row.head{height:37px;background:#f2f2f2;color:#3f86cb;border-color:#ccc;flex:none}
.scroll{height:575px;display:flex;overflow:hidden}
.rows{flex:1;margin-top:-8px}
.v2{height:574px}
.v2 i{margin-top:97px;height:154px}
.hbar{height:17px;background:#f1f1f1;display:flex;align-items:center;padding-left:4px;color:#444;flex:none}
.hbar i{height:16px;width:1211px;background:#c1c1c1;margin-left:6px}
.hbar .lf{transform:rotate(-90deg)}
.hbar .rt{transform:rotate(90deg);margin-left:15px}
.hbar b{width:18px;height:17px;background:#dcdcdc;margin-left:auto}
.pagethumb{position:absolute;right:0;top:597px;width:8.500px;height:49px;border-radius:5px;background:#555}
.cursor{position:absolute;left:853px;top:343px;width:12px;height:17px}

/* taskbars */
.task{display:flex;align-items:center;color:#fff;background:#1d1f20}
.start{display:flex;justify-content:center}
.find{background:#f2f2f2;color:#333;display:flex;align-items:center;height:100%;border-top:1px solid #bbb}
.apps{display:flex;height:100%}
.apps span{display:flex;align-items:center;justify-content:center;position:relative;height:100%}
.run::after{content:"";position:absolute;left:5px;right:5px;bottom:0;height:3px;background:#76b5ea}
.run.cur::after{left:0;right:0}
.run.two::after{background:linear-gradient(90deg,#76b5ea 79%,#4f7ea6 79%)}
.cur{background:#4a4d4f}
.tray{display:flex;align-items:center;margin-left:auto;height:100%}
.tray i{width:1px;height:100%;background:#666}
.clock{display:flex;flex-direction:column;text-align:center}
.inner{height:43px;flex:none}
.inner .start{width:51px}
.inner .start svg{width:17px;height:18px}
.inner .find{width:368px;padding-left:12.500px;font-size:15.200px;line-height:38px}
.inner .find svg{width:18px;height:18px;margin-right:12px}
.inner .apps svg{width:26px;height:26px}
.inner .apps .s16{width:17px;height:17px}
.inner .apps span{width:53px}
.inner .apps .w1{width:51.500px}
.inner .clock{width:64px;font-size:11.600px;line-height:19.500px;margin:0 23px 0 12px}
.inner .hp{width:25px;height:25px;margin-right:9px}
.inner .ct{width:14px;height:9px;margin-right:10px}
.inner .sd{width:18px;height:15px}
.inner .nt{width:18px;height:18px;margin-right:21px}
.inner .tray{padding-right:4px}
.outer{height:50px;flex:none}
.outer .start{width:60px}
.outer .start svg{width:20px;height:20px}
.outer .find{width:429.500px;padding-left:15px;font-size:17.800px;line-height:46px}
.outer .find svg{width:20px;height:20px;margin-right:15px}
.outer .apps{margin-left:-.5px}
.outer .apps svg{width:29px;height:29px}
.outer .apps .s16{width:20px;height:20px}
.outer .apps span{width:62px}
.outer .apps span:nth-child(-n+2){padding-right:3px}
.outer .clock{width:84px;font-size:13.500px;line-height:22.500px;margin:0 20px 0 11px}
.outer .hp{width:29px;height:29px;margin-right:11px}
.outer .ct{width:16px;height:10px;margin-right:12px}
.outer .sd{width:20px;height:17px}
.outer .tray{padding-right:5px}
.nwrap{position:relative;width:20px;margin-right:25px}
.outer .nt{width:20px;height:20px}
.nwrap em{position:absolute;left:10px;top:9px;width:20px;height:20px;border-radius:50%;border:1px solid #888;background:#2a2c2d;font-size:13px;line-height:18px;text-align:center}

/* recorder watermark */
.mark{position:absolute;left:658px;top:23px;width:340px;height:64px}
.mark text{font:700 39px Lato,"Open Sans",sans-serif;fill:#fff;stroke:#000;stroke-width:9px;stroke-linejoin:round;paint-order:stroke}

/* player controls */
.ctl{height:52px;flex:none;background:#f0f0f0}
.seek{height:18px;display:flex;align-items:center;font-size:12.900px;line-height:18px;padding:0 7px 0 9px;justify-content:space-between}
.track{width:1805px;height:9px;border-radius:3px;background:linear-gradient(#bcbcbc,#dcdcdc)}
.track i{display:block;width:355px;height:9px;border-radius:3px;background:#2580d2}
.btns{display:flex;align-items:center;padding-left:4px;height:33px}
button{width:24px;height:25px;padding:0;border:1px solid #adadad;background:#e1e1e1;display:flex;align-items:center;justify-content:center}
button svg{width:17px;height:14px;fill:#6e6e6e}
button.big{width:30px;height:30px}
.big svg{width:16px;height:18px}
.grp{display:flex;gap:2px;margin-left:14px}
.vol{margin-left:auto;display:flex;align-items:flex-end;padding-right:6px;height:31px}
.sp{width:15px;height:13px;margin:0 6px 1px 0}
.lvl{position:relative}
.lvl svg{width:74px;height:24px}
.lvl span{position:absolute;left:3px;top:-1px;font-size:12px;line-height:16px;color:#777}
```
